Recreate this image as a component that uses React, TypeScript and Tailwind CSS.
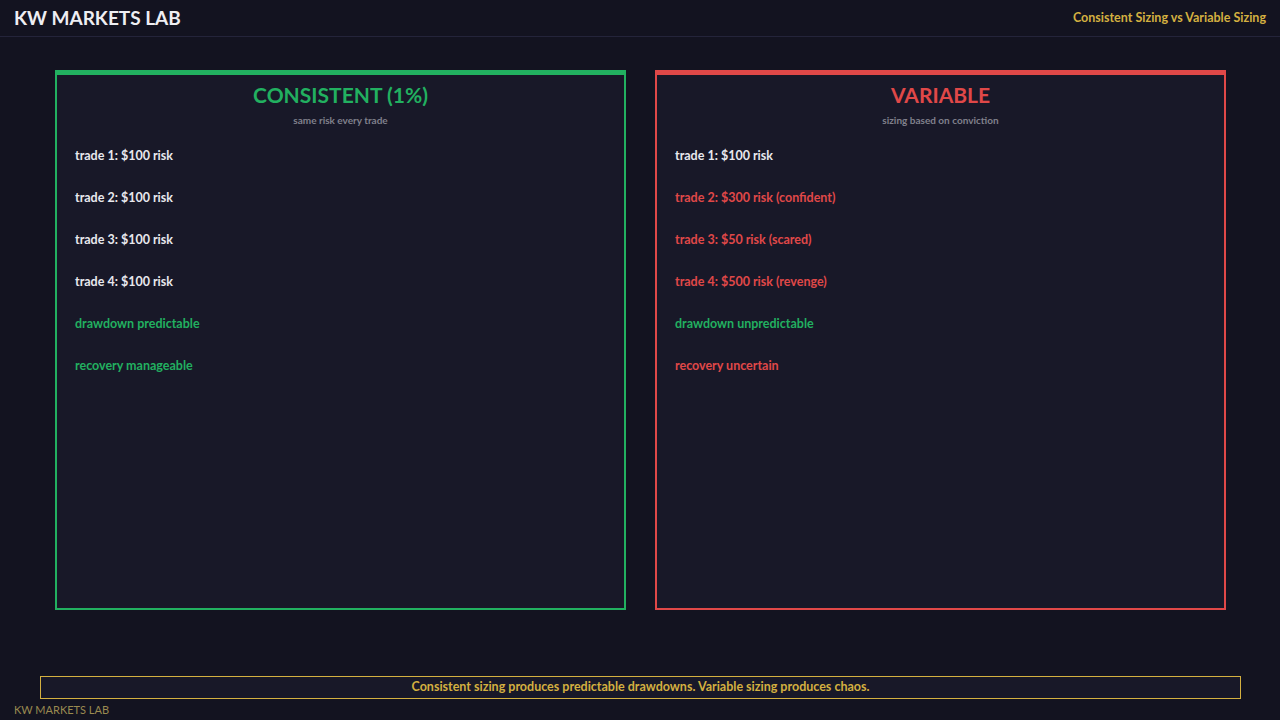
export default function App() {
  const left = [
    { t: 'trade 1: $100 risk', c: 'text-[#e8e8ee]' },
    { t: 'trade 2: $100 risk', c: 'text-[#e8e8ee]' },
    { t: 'trade 3: $100 risk', c: 'text-[#e8e8ee]' },
    { t: 'trade 4: $100 risk', c: 'text-[#e8e8ee]' },
    { t: 'drawdown predictable', c: 'text-[#22b060]' },
    { t: 'recovery manageable', c: 'text-[#22b060]' },
  ];
  const right = [
    { t: 'trade 1: $100 risk', c: 'text-[#e8e8ee]' },
    { t: 'trade 2: $300 risk (confident)', c: 'text-[#e04848]' },
    { t: 'trade 3: $50 risk (scared)', c: 'text-[#e04848]' },
    { t: 'trade 4: $500 risk (revenge)', c: 'text-[#e04848]' },
    { t: 'drawdown unpredictable', c: 'text-[#22b060]' },
    { t: 'recovery uncertain', c: 'text-[#e04848]' },
  ];
  const panel = (title: string, sub: string, rows: typeof left, border: string, titleC: string) => (
    <div className={`w-[571px] h-[540px] border-2 border-t-[5px] ${border} bg-[#181828] flex flex-col`}>
      <div className={`text-center text-[21px] font-bold leading-[24px] mt-[8px] ${titleC}`}>{title}</div>
      <div className="text-center text-[10px] font-bold text-[#80808c] mt-[6px]">{sub}</div>
      <div className="flex flex-col gap-[25px] pl-[18px] mt-[19px]">
        {rows.map((r, i) => (
          <div key={i} className={`text-[12.5px] font-bold leading-[17px] ${r.c}`}>{r.t}</div>
        ))}
      </div>
    </div>
  );
  return (
    <div className="w-[1280px] h-[720px] bg-[#131320] flex flex-col relative" style={{ fontFamily: 'Lato, sans-serif' }}>
      <div className="h-[37px] border-b border-[#24243a] flex items-center justify-between px-[14px]">
        <div className="text-[19px] font-bold text-[#eeeef2]">KW MARKETS LAB</div>
        <div className="text-[12.5px] font-bold text-[#d4b040]">Consistent Sizing vs Variable Sizing</div>
      </div>
      <div className="flex gap-[29px] pl-[55px] mt-[33px]">
        {panel('CONSISTENT (1%)', 'same risk every trade', left, 'border-[#22b060]', 'text-[#22b060]')}
        {panel('VARIABLE', 'sizing based on conviction', right, 'border-[#e04848]', 'text-[#e04848]')}
      </div>
      <div className="mt-[66px] mx-[40px] w-[1201px] h-[23px] border border-[#d4b040] bg-[#181828] flex items-center justify-center text-[12.5px] font-bold text-[#d4b040]">
        Consistent sizing produces predictable drawdowns. Variable sizing produces chaos.
      </div>
      <div className="pl-[14px] mt-[3px] text-[11px] text-[#9a8a50]">KW MARKETS LAB</div>
    </div>
  );
}
